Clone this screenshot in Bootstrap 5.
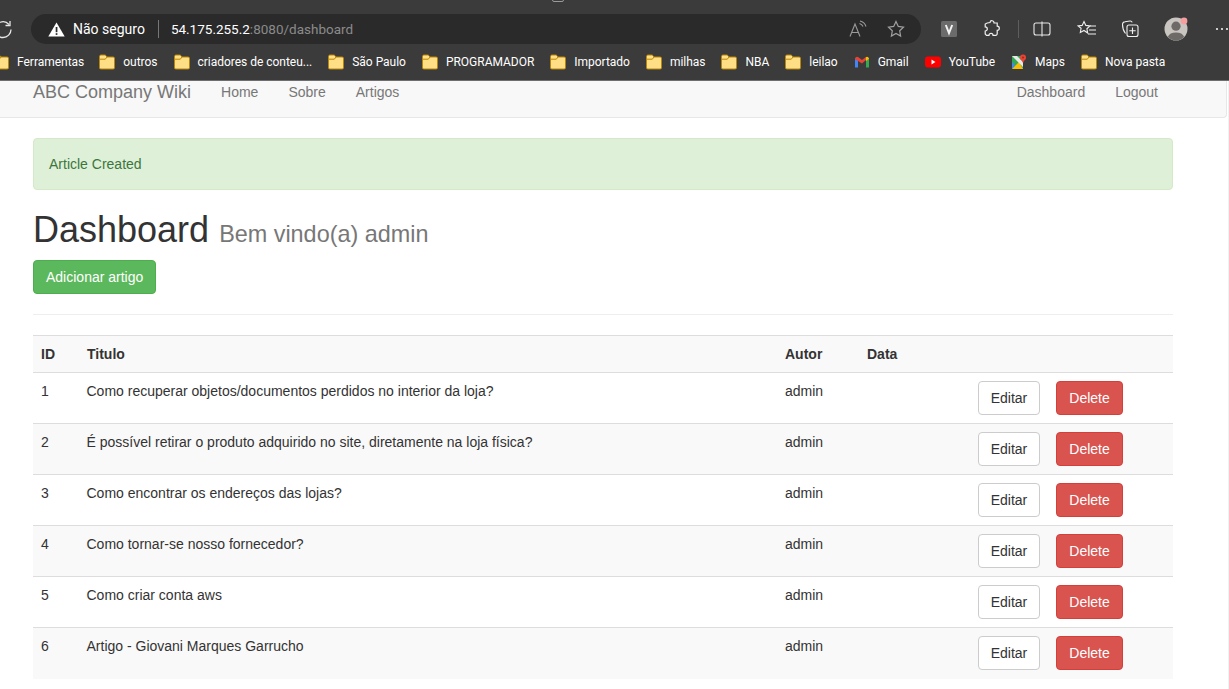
<!DOCTYPE html>
<html lang="pt"><head><meta charset="utf-8"><title>Dashboard</title>
<link href="https://cdn.jsdelivr.net/npm/bootstrap@5.3.0/dist/css/bootstrap.min.css" rel="stylesheet">
<style>
html,body{height:689px;overflow:hidden;background:#fff}
body{font-family:"Liberation Sans",Arial,sans-serif;font-size:14px;line-height:20px;color:#333}
.chrome{position:relative;background:#3b3b3b;height:81px;border-bottom:1px solid #6e6e6e;overflow:hidden;font-family:Roboto,"Noto Sans",sans-serif;color:#fff}
.tabsliver{position:absolute;left:552px;top:-10px;width:12px;height:12px;border:1px solid #9a9a9a;border-radius:2px}
.toolrow{height:47px;padding-top:14px;align-items:flex-start}
.reload{width:31px;height:30px;flex:none}
.addr{width:891px;height:30px;background:#2a2a2a;border-radius:15px;font-size:14px;padding:0 16px 0 17px}
.addr .sep{width:1px;height:18px;background:#777;margin:0 12px 0 13px}
.addr .urltxt{font-size:13.5px}
.addr .dim{color:#8a8a8a}
.readicon{margin-left:auto}
.staricon{margin-left:20px}
.warnicon{margin-right:8px;flex:none}
.tools{margin-left:19px;height:30px}
.tool{flex:none;display:flex;align-items:center;justify-content:center}
.t-v{width:18px}
.t-puz{margin-left:25px}
.t-sep{width:1px;height:18px;background:#5e5e5e;margin-left:17px}
.t-split{margin-left:14px}
.t-fav{margin-left:26px}
.t-col{margin-left:24px}
.t-ava{margin-left:25px}
.t-dots{margin-left:27px}
.bmarks{height:30px;margin-left:-7px;font-size:12px;letter-spacing:-.02px;white-space:nowrap;gap:16px}
.bmark{gap:8px;flex:none}
.bmark:first-child{margin-right:-1px}
.bmark svg{flex:none;display:block}
.pagewrap{height:608px;border-right:1px solid #f1f1f1}
.wikinav{height:37px;background:#f8f8f8;border-bottom:1px solid #e7e7e7;border-right:1px solid #e7e7e7;border-bottom-right-radius:4px;width:1227px;padding:0 0 14px 33px;margin:0}
.wikinav .brand{font-size:18px;color:#777;margin-right:15px;text-decoration:none}
.wikinav .lnk{color:#777;padding:0 15px;text-decoration:none}
.wikinav .rightnav{margin-left:auto;margin-right:53px}
.wrap{width:1140px;margin-left:33px}
.okbox{height:52px;margin:20px 0 20px;padding:15px;background:#dff0d8;border:1px solid #d6e9c6;border-radius:4px;color:#3c763d}
.head1{font-family:inherit;font-size:36px;line-height:40px;font-weight:500;margin:0 0 10px;color:#333}
.head1 small{font-size:23.4px;color:#777;font-weight:400;line-height:1}
.addbtn{display:inline-block;height:34px;padding:6px 12px;font-size:14px;line-height:20px;border-radius:4px;background:#5cb85c;border:1px solid #4cae4c;color:#fff;vertical-align:top;text-decoration:none}
.rule{margin:20px 0;border:0;border-top:1px solid #eee;opacity:1}
.wtable{width:1140px;table-layout:fixed;border-collapse:collapse;margin:0}
.wtable th,.wtable td{padding:8px;border-top:1px solid #ddd;line-height:20px;vertical-align:top;color:#333;background:#fff}
.wtable tr.alt th,.wtable tr.alt td{background:#f9f9f9}
.wtable th{height:37px}
.wtable td{height:51px}
.wtable td:nth-child(2){padding-left:7.5px}
.c1{width:46px}.c2{width:698px}.c3{width:82px}.c4{width:111px}
.acts{gap:16px}
.bt{display:inline-block;height:34px;padding:6px 0;text-align:center;font-size:14px;line-height:20px;border-radius:4px;text-decoration:none}
.bt-edit{width:62px;background:#fff;border:1px solid #ccc;color:#333}
.bt-del{width:67px;background:#d9534f;border:1px solid #d43f3a;color:#fff}
</style></head><body>
<svg width="0" height="0" class="position-absolute"><defs>
<symbol id="fold" viewBox="0 0 16 16"><path d="M.5 2.600C.5 1.700 1.200 1 2 1h3.800c.4 0 .8.2 1 .5L8 3h6.200c.7 0 1.300.6 1.300 1.300v9.400c0 .7-.6 1.300-1.300 1.300H1.800C1.100 15 .5 14.400.5 13.700z" fill="#ffdf85" stroke="#b8860b" stroke-width="1"/><path d="M1 5.200h5.300L8 3" fill="none" stroke="#b8860b" stroke-width="1"/></symbol>
</defs></svg>
<div class="chrome">
 <div class="tabsliver"></div>
 <div class="d-flex toolrow">
  <div class="reload d-flex align-items-center"><svg width="31" height="30" viewBox="0 0 31 30"><path d="M9 10.500A8 8 0 0 0-5 15.500a8 8 0 0 0 16 0" fill="none" stroke="#e8e8e8" stroke-width="1.300"/><path d="M10 7v4.500H5.500" fill="none" stroke="#e8e8e8" stroke-width="1.300"/></svg></div>
  <div class="addr d-flex align-items-center">
   <svg width="17" height="15" viewBox="0 0 17 15" class="warnicon"><path d="M8.500.5L16.700 14.500H.3z" fill="#fff"/><rect x="7.700" y="5" width="1.700" height="5.200" fill="#2a2a2a"/><rect x="7.700" y="11.200" width="1.700" height="1.700" fill="#2a2a2a"/></svg>
   <span>Não seguro</span><span class="sep"></span><span class="urltxt">54.175.255.2<span class="dim">:8080/dashboard</span></span>
   <svg class="readicon" width="18" height="18" viewBox="0 0 18 18"><path d="M1 16.500L6 4l5 12.500M2.800 12.500h6.400" fill="none" stroke="#9a9a9a" stroke-width="1.100"/><path d="M10.500 3.500a5 5 0 0 1 3.500 3M11 1a8 8 0 0 1 6 5.500" fill="none" stroke="#9a9a9a" stroke-width="1.100"/></svg>
   <svg class="staricon" width="18" height="18" viewBox="0 0 18 18"><path d="M9 1.500l2.300 4.900 5.200.7-3.800 3.700.9 5.300L9 13.500l-4.600 2.600.9-5.300L1.500 7.100l5.200-.7z" fill="none" stroke="#a0a0a0" stroke-width="1.200"/></svg>
  </div>
  <div class="tools d-flex align-items-center">
   <div class="tool t-v"><svg width="16" height="16" viewBox="0 0 16 16"><rect width="16" height="16" rx="1.500" fill="#6b6b6b"/><path d="M4.800 4l3.200 8 3.200-8" fill="none" stroke="#f2f2f2" stroke-width="2"/></svg></div>
   <div class="tool t-puz"><svg width="18" height="18" viewBox="0 0 18 18"><path d="M7 2.500a2 2 0 0 1 4 .5h3.200v3.200a2.100 2.100 0 0 1 0 4.200v3.400a1.500 1.500 0 0 1-1.500 1.500H10a2 2 0 0 0-4 0H3.500L2.200 14v-3a2.100 2.100 0 0 0 0-4.200V4l2-1z" fill="none" stroke="#f0f0f0" stroke-width="1.200"/></svg></div>
   <div class="tool t-sep"></div>
   <div class="tool t-split"><svg width="18" height="16" viewBox="0 0 18 16"><rect x="1" y="2" width="16" height="12" rx="2" fill="none" stroke="#e8e8e8" stroke-width="1.100"/><path d="M9 .5v15" stroke="#e8e8e8" stroke-width="1.100"/></svg></div>
   <div class="tool t-fav"><svg width="20" height="18" viewBox="0 0 20 18"><path d="M7 1.500l1.800 3.900 4.200.5-3.100 2.900.8 4.200L7 10.500l-3.700 2 .8-4.200L1 5.900l4.200-.5z" fill="none" stroke="#f0f0f0" stroke-width="1.100"/><path d="M13 6h6M12 10h7M11 14h8" stroke="#f0f0f0" stroke-width="1.100"/></svg></div>
   <div class="tool t-col"><svg width="18" height="18" viewBox="0 0 18 18"><path d="M4.500 13.500C2.500 11 1.500 8 1.500 4.500c0-1.500 1-2.500 2.500-2.700l5-.8c1-.1 1.800.3 2.200 1.400" fill="none" stroke="#f0f0f0" stroke-width="1.100"/><rect x="6" y="5" width="11" height="11.500" rx="2" fill="none" stroke="#f0f0f0" stroke-width="1.100"/><path d="M11.500 7.500v6.500M8.300 10.700h6.400" stroke="#f0f0f0" stroke-width="1.100"/></svg></div>
   <div class="tool t-ava"><svg width="24" height="24" viewBox="0 0 24 24"><circle cx="12" cy="12" r="11.500" fill="#c9c6c2"/><circle cx="12" cy="9.200" r="4.600" fill="#6d6a68"/><path d="M3.800 20a8.600 6.400 0 0 1 16.400 0A11.500 11.500 0 0 1 3.800 20z" fill="#6d6a68"/><circle cx="20" cy="4" r="3.400" fill="#f4a0a0"/></svg></div>
   <div class="tool t-dots"><svg width="14" height="4" viewBox="0 0 14 4"><circle cx="2" cy="2" r="1.100" fill="#eee"/><circle cx="7" cy="2" r="1.100" fill="#eee"/><circle cx="12" cy="2" r="1.100" fill="#eee"/></svg></div>
  </div>
 </div>
 <div class="d-flex align-items-center bmarks">
  <div class="d-flex align-items-center bmark"><svg width="16" height="16"><use href="#fold"/></svg>Ferramentas</div>
  <div class="d-flex align-items-center bmark"><svg width="16" height="16"><use href="#fold"/></svg>outros</div>
  <div class="d-flex align-items-center bmark"><svg width="16" height="16"><use href="#fold"/></svg>criadores de conteu...</div>
  <div class="d-flex align-items-center bmark"><svg width="16" height="16"><use href="#fold"/></svg>São Paulo</div>
  <div class="d-flex align-items-center bmark"><svg width="16" height="16"><use href="#fold"/></svg>PROGRAMADOR</div>
  <div class="d-flex align-items-center bmark"><svg width="16" height="16"><use href="#fold"/></svg>Importado</div>
  <div class="d-flex align-items-center bmark"><svg width="16" height="16"><use href="#fold"/></svg>milhas</div>
  <div class="d-flex align-items-center bmark"><svg width="16" height="16"><use href="#fold"/></svg>NBA</div>
  <div class="d-flex align-items-center bmark"><svg width="16" height="16"><use href="#fold"/></svg>leilao</div>
  <div class="d-flex align-items-center bmark"><svg width="16" height="16" viewBox="0 0 16 16"><path d="M1 5v8.500h3V6z" fill="#4285f4"/><path d="M12 6v7.500h3V5z" fill="#34a853"/><path d="M1 5c0-2 2-3 3.300-1.800L8 6l3.700-2.800L12 6 8 9.500 1 5z" fill="#ea4335"/><path d="M11.700 3.200C13 2 15 3 15 5l-3 2z" fill="#fbbc04"/></svg>Gmail</div>
  <div class="d-flex align-items-center bmark"><svg width="16" height="16" viewBox="0 0 16 16"><rect y="2.500" width="16" height="11" rx="3" fill="#f00"/><path d="M6.500 5.500v5l4-2.500z" fill="#fff"/></svg>YouTube</div>
  <div class="d-flex align-items-center bmark"><svg width="16" height="16" viewBox="0 0 16 16"><path d="M1 2h11v13H1z" fill="#34a853"/><path d="M1 15L8 8l4 7z" fill="#fbbc04"/><path d="M1 15V8l3 3z" fill="#4285f4"/><path d="M1 2l11 11V8L6 2z" fill="#e8e8e8"/><circle cx="12" cy="3.500" r="3" fill="#ea4335"/><path d="M10 5l2 4 2-4z" fill="#ea4335"/><circle cx="12" cy="3.500" r="1" fill="#a52714"/></svg>Maps</div>
  <div class="d-flex align-items-center bmark"><svg width="16" height="16"><use href="#fold"/></svg>Nova pasta</div>
 </div>
</div>
<div class="pagewrap">
<nav class="wikinav d-flex align-items-center">
 <a class="brand" href="#">ABC Company Wiki</a>
 <a class="lnk" href="#">Home</a><a class="lnk" href="#">Sobre</a><a class="lnk" href="#">Artigos</a>
 <div class="rightnav d-flex"><a class="lnk" href="#">Dashboard</a><a class="lnk" href="#">Logout</a></div>
</nav>
<main class="wrap">
 <div class="okbox">Article Created</div>
 <h1 class="head1">Dashboard <small>Bem vindo(a) admin</small></h1>
 <a class="addbtn" href="#">Adicionar artigo</a>
 <hr class="rule">
 <table class="wtable">
  <colgroup><col class="c1"><col class="c2"><col class="c3"><col class="c4"><col></colgroup>
  <tr class="alt"><th>ID</th><th>Titulo</th><th>Autor</th><th>Data</th><th></th></tr>
  <tr><td>1</td><td>Como recuperar objetos/documentos perdidos no interior da loja?</td><td>admin</td><td></td><td><div class="d-flex acts"><a class="bt bt-edit" href="#">Editar</a><a class="bt bt-del" href="#">Delete</a></div></td></tr>
  <tr class="alt"><td>2</td><td>É possível retirar o produto adquirido no site, diretamente na loja física?</td><td>admin</td><td></td><td><div class="d-flex acts"><a class="bt bt-edit" href="#">Editar</a><a class="bt bt-del" href="#">Delete</a></div></td></tr>
  <tr><td>3</td><td>Como encontrar os endereços das lojas?</td><td>admin</td><td></td><td><div class="d-flex acts"><a class="bt bt-edit" href="#">Editar</a><a class="bt bt-del" href="#">Delete</a></div></td></tr>
  <tr class="alt"><td>4</td><td>Como tornar-se nosso fornecedor?</td><td>admin</td><td></td><td><div class="d-flex acts"><a class="bt bt-edit" href="#">Editar</a><a class="bt bt-del" href="#">Delete</a></div></td></tr>
  <tr><td>5</td><td>Como criar conta aws</td><td>admin</td><td></td><td><div class="d-flex acts"><a class="bt bt-edit" href="#">Editar</a><a class="bt bt-del" href="#">Delete</a></div></td></tr>
  <tr class="alt"><td>6</td><td>Artigo - Giovani Marques Garrucho</td><td>admin</td><td></td><td><div class="d-flex acts"><a class="bt bt-edit" href="#">Editar</a><a class="bt bt-del" href="#">Delete</a></div></td></tr>
 </table>
</main>
</div>
<script src="https://cdn.jsdelivr.net/npm/bootstrap@5.3.0/dist/js/bootstrap.bundle.min.js"></script>
</body></html>
